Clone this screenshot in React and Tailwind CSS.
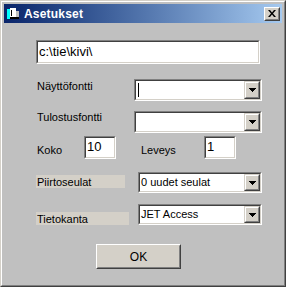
import React from 'react';

const font = { fontFamily: '"Liberation Sans", Arial, sans-serif' };

const Combo = ({ value, caret, width = 'w-[128px]', height = 'h-[22px]' }) => (
  <div className={`${width} ${height} border border-t-[#808080] border-l-[#808080] border-b-white border-r-white`}>
    <div className="w-full h-full flex bg-white border border-t-[#404040] border-l-[#404040] border-b-[#d4d0c8] border-r-[#d4d0c8]">
      <div className="flex-1 flex items-center pl-[1px] text-[11px] text-black leading-[13px]">
        {caret && <span className="w-[1px] h-[14px] bg-black ml-[1px]" />}
        {value}
      </div>
      <div className="w-[16px] h-full bg-[#d4d0c8] border border-t-[#d4d0c8] border-l-[#d4d0c8] border-b-[#404040] border-r-[#404040]">
        <div className="w-full h-full flex items-center justify-center border border-t-white border-l-white border-b-[#808080] border-r-[#808080]">
          <svg width="7" height="4" viewBox="0 0 7 4">
            <path d="M0 0h7v1H0zM1 1h5v1H1zM2 2h3v1H2zM3 3h1v1H3z" fill="#000" />
          </svg>
        </div>
      </div>
    </div>
  </div>
);

const SmallBox = ({ value }) => (
  <div className="w-[32px] h-[23px] border border-t-[#808080] border-l-[#808080] border-b-white border-r-white">
    <div className="w-full h-full bg-white border border-t-[#404040] border-l-[#404040] border-b-[#d4d0c8] border-r-[#d4d0c8] text-[13px] leading-[18px] pl-[1px] text-black">
      {value}
    </div>
  </div>
);

export default function App() {
  return (
    <div style={font} className="w-[286px] h-[287px] bg-[#c0c0c0] select-none">
      {/* window frame */}
      <div className="w-full h-full border border-t-[#d4d0c8] border-l-[#d4d0c8] border-b-[#404040] border-r-[#404040]">
        <div className="w-full h-full border border-t-white border-l-white border-b-[#808080] border-r-[#808080] p-[2px] flex flex-col">
          {/* title bar */}
          <div className="h-[19px] flex items-center bg-gradient-to-r from-[#0a246a] to-[#a6caf0] pl-[3px] pr-[2px]">
            <svg width="13" height="12" viewBox="0 0 13 12" className="mr-[4px]">
              <rect x="0" y="1" width="3" height="10" fill="#00ffff" />
              <rect x="3" y="0" width="6" height="9" fill="#ffffff" />
              <rect x="3" y="9" width="9" height="2" fill="#000" />
              <rect x="9" y="3" width="3" height="6" fill="#c0c0c0" />
              <rect x="4" y="2" width="1" height="6" fill="#000" />
            </svg>
            <span className="text-white font-bold text-[12px] leading-[14px] tracking-[0.2px]">Asetukset</span>
            <div className="ml-auto w-[16px] h-[14px] bg-[#d4d0c8] border border-t-white border-l-white border-b-[#404040] border-r-[#404040]">
              <div className="w-full h-full flex items-center justify-center border border-t-[#d4d0c8] border-l-[#d4d0c8] border-b-[#808080] border-r-[#808080]">
                <svg width="8" height="7" viewBox="0 0 8 7">
                  <path d="M0 0h2l2 2.5L6 0h2L5 3.5 8 7H6L4 4.5 2 7H0l3-3.5z" fill="#000" />
                </svg>
              </div>
            </div>
          </div>

          {/* content */}
          <div className="flex-1 flex flex-col pl-[32px] pr-[20px] text-black">
            <div className="mt-[17px] w-[224px] h-[24px] border border-t-[#808080] border-l-[#808080] border-b-white border-r-white">
              <div className="w-full h-full bg-white border border-t-[#404040] border-l-[#404040] border-b-[#d4d0c8] border-r-[#d4d0c8] text-[13px] leading-[20px] pl-[1px]">
                c:\tie\kivi\
              </div>
            </div>

            <div className="mt-[15px] flex items-start">
              <span className="ml-[1px] mt-[1px] text-[11px] leading-[13px]">Näyttöfontti</span>
              <div className="ml-auto"><Combo value="" caret /></div>
            </div>

            <div className="mt-[10px] flex items-start">
              <span className="ml-[1px] mt-0 text-[11px] leading-[13px]">Tulostusfontti</span>
              <div className="ml-auto"><Combo value="" /></div>
            </div>

            <div className="mt-[3px] flex items-start">
              <span className="ml-[1px] mt-[8px] w-[47px] text-[11px] leading-[13px]">Koko</span>
              <SmallBox value="10" />
              <span className="ml-[25px] mt-[8px] w-[63px] text-[11px] leading-[13px]">Leveys</span>
              <SmallBox value="1" />
            </div>

            <div className="mt-[13px] flex items-start">
              <span className="mt-[3px] w-[89px] h-[13px] bg-[#d4d0c8] pl-[1px] text-[11px] leading-[14px]">Piirtoseulat</span>
              <div className="ml-auto"><Combo value="0 uudet seulat" width="w-[124px]" height="h-[21px]" /></div>
            </div>

            <div className="mt-[11px] flex items-start">
              <span className="mt-[8px] w-[93px] h-[13px] bg-[#d4d0c8] pl-[1px] text-[11px] leading-[14px]">Tietokanta</span>
              <div className="ml-auto"><Combo value="JET Access" width="w-[124px]" height="h-[21px]" /></div>
            </div>

            <div className="mt-[19px] ml-[60px] w-[85px] h-[25px] bg-[#d4d0c8] border border-t-white border-l-white border-b-[#404040] border-r-[#404040]">
              <div className="w-full h-full flex items-center justify-center border border-t-[#d4d0c8] border-l-[#d4d0c8] border-b-[#808080] border-r-[#808080] text-[12px]">
                OK
              </div>
            </div>
          </div>
        </div>
      </div>
    </div>
  );
}
